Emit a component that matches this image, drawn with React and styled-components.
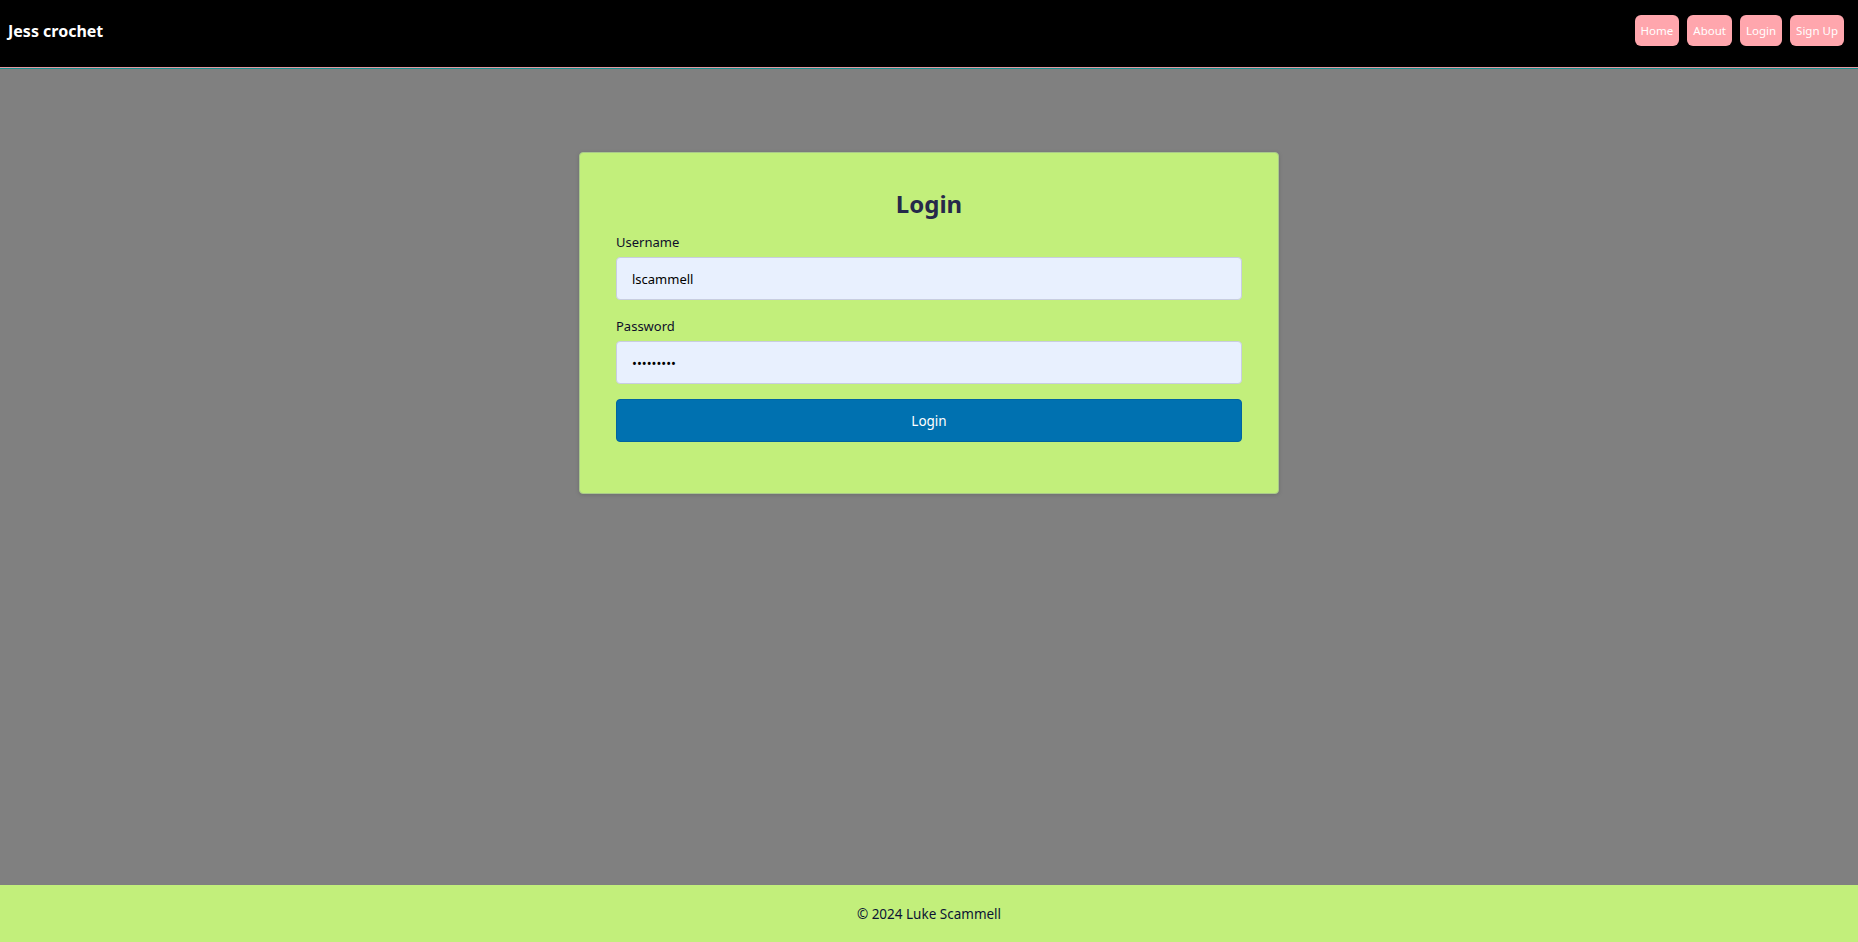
import React from "react";
import styled, { createGlobalStyle } from "styled-components";

const Global = createGlobalStyle`
  html, body { margin: 0; padding: 0; }
  body { font-family: "Noto Sans", "Open Sans", sans-serif; background: #808080; }
  * { box-sizing: border-box; }
`;

const Page = styled.div`
  min-height: 100vh;
  display: flex;
  flex-direction: column;
`;

const Header = styled.header`
  height: 69px;
  background: #000;
  border-bottom: 1px solid #1b8f8f;
  box-shadow: inset 0 -1px 0 #e59aa2;
  display: flex;
  align-items: center;
  justify-content: space-between;
  padding: 0 14px 2px 8px;
`;

const Brand = styled.div`
  color: #fff;
  font-weight: 700;
  font-size: 16px;
  margin-top: -5px;
`;

const Nav = styled.nav`
  display: flex;
  gap: 8px;
  margin-top: -6px;
`;

const NavButton = styled.button`
  height: 31px;
  padding: 0 6px;
  border: none;
  border-radius: 6px;
  background: #ffa6ad;
  color: #fff;
  font-family: inherit;
  font-size: 11.5px;
  cursor: pointer;
`;

const Main = styled.main`
  flex: 1;
  display: flex;
  justify-content: center;
  align-items: flex-start;
  padding-top: 83px;
`;

const Card = styled.form`
  width: 700px;
  background: #c2ef7b;
  border: 1px solid #a9c98a;
  border-radius: 4px;
  box-shadow: 0 1px 4px rgba(0, 0, 0, 0.15);
  padding: 36px 36px 51px;
  display: flex;
  flex-direction: column;
`;

const Title = styled.h2`
  margin: 0 0 13px;
  text-align: center;
  font-size: 24px;
  line-height: 30px;
  font-weight: 700;
  color: #25294a;
`;

const Label = styled.label`
  font-size: 13px;
  line-height: 20px;
  color: #0d0d2a;
  margin-bottom: 5px;
`;

const Input = styled.input`
  height: 43px;
  width: 100%;
  background: #e8f0fe;
  border: 1px solid #c8cde0;
  border-radius: 4px;
  padding: 0 15px;
  font-family: inherit;
  font-size: 13px;
  color: #000;
  margin-bottom: ${(p) => p.$mb || 16}px;
  outline: none;
`;

const Submit = styled.button`
  height: 43px;
  width: 100%;
  background: #0071b0;
  border: 1px solid #0064a0;
  border-radius: 4px;
  color: #fff;
  font-family: inherit;
  font-size: 13.5px;
  cursor: pointer;
`;

const Footer = styled.footer`
  height: 57px;
  background: #c2ef7b;
  display: flex;
  align-items: center;
  justify-content: center;
  font-size: 13.5px;
  color: #0b1433;
`;

export default function App() {
  return (
    <Page>
      <Global />
      <Header>
        <Brand>Jess crochet</Brand>
        <Nav>
          <NavButton>Home</NavButton>
          <NavButton>About</NavButton>
          <NavButton>Login</NavButton>
          <NavButton>Sign Up</NavButton>
        </Nav>
      </Header>
      <Main>
        <Card onSubmit={(e) => e.preventDefault()}>
          <Title>Login</Title>
          <Label>Username</Label>
          <Input type="text" defaultValue="lscammell" />
          <Label>Password</Label>
          <Input type="password" defaultValue="password1" $mb={15} />
          <Submit type="submit">Login</Submit>
        </Card>
      </Main>
      <Footer>© 2024 Luke Scammell</Footer>
    </Page>
  );
}
